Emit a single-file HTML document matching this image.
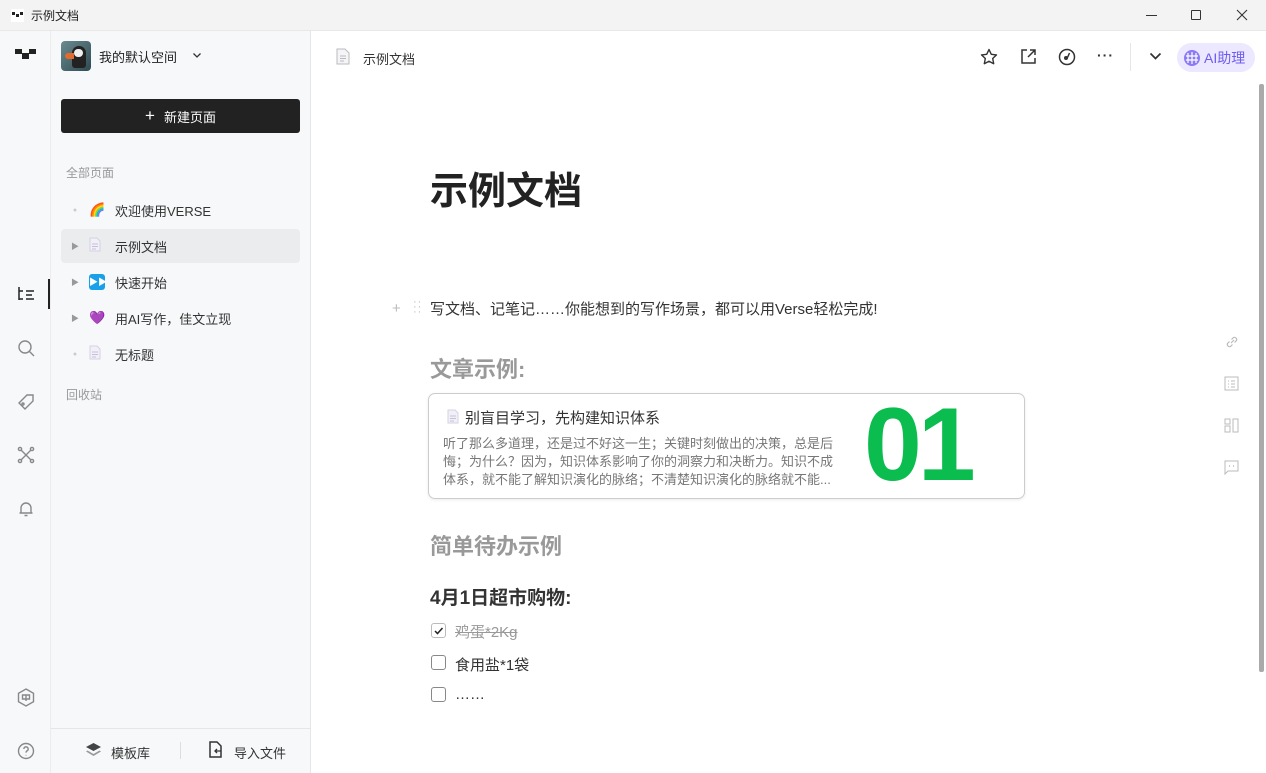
<!DOCTYPE html>
<html><head><meta charset="utf-8"><style>
*{box-sizing:border-box;margin:0;padding:0}
body{width:1266px;height:773px;overflow:hidden;background:#fff;font-family:"Liberation Sans","Noto Sans CJK SC",sans-serif;color:#222;position:relative}
.abs{position:absolute}
.title{left:0;top:0;width:1266px;height:31px;background:#f3f3f3;border-bottom:1px solid #e8e8e8}
.rail{left:0;top:31px;width:51px;height:742px;background:#f7f8fa;border-right:1px solid #ececec}
.side{left:51px;top:31px;width:260px;height:742px;background:#f7f8fa;border-right:1px solid #e6e6e6}
.item{position:absolute;left:10px;width:239px;height:34px;font-size:13px;color:#333;display:flex;align-items:center}
.item .tri{width:28px;text-align:center;color:#999;font-size:8px}
.item .ic{width:26px;font-size:13px}
.g{stroke:#888;fill:none;stroke-width:1.4}
</style></head><body>
<div class="abs title"></div>
<svg class="abs" style="left:11px;top:9px" width="13" height="13"><rect width="13" height="13" fill="#fff"/><rect x="1" y="3" width="3" height="3" fill="#222"/><rect x="5" y="5" width="3" height="3" fill="#222"/><rect x="9" y="3" width="3" height="3" fill="#222"/></svg>
<div class="abs" style="left:31px;top:7px;font-size:12px;color:#222">示例文档</div>
<div class="abs" style="left:1146px;top:15px;width:11px;height:1px;background:#333"></div>
<div class="abs" style="left:1191px;top:10px;width:10px;height:10px;border:1px solid #333;border-radius:1px"></div>
<svg class="abs" style="left:1236px;top:9px" width="12" height="12"><path d="M1 1L11 11M11 1L1 11" stroke="#333" stroke-width="1.1"/></svg>

<div class="abs rail"></div>
<svg class="abs" style="left:15px;top:47px" width="22" height="14"><rect x="0" y="2" width="7" height="5" fill="#222"/><rect x="7" y="6" width="7" height="6" fill="#222"/><rect x="14" y="2" width="7" height="5" fill="#222"/></svg>
<svg class="abs" style="left:18px;top:286px" width="18" height="16"><path d="M1 1v13M1 5h4M1 13h4M8 5h8M8 13h8M8 9h6" stroke="#222" stroke-width="1.5" fill="none"/></svg>
<div class="abs" style="left:48px;top:279px;width:2px;height:30px;background:#222"></div>
<svg class="abs" style="left:17px;top:339px" width="19" height="19"><circle cx="8" cy="8" r="6" class="g"/><path d="M12.5 12.5L17 17" class="g"/></svg>
<svg class="abs" style="left:17px;top:393px" width="18" height="18"><path d="M2 10L10 2h6v6l-8 8z" class="g"/><circle cx="6" cy="11" r="1" class="g"/></svg>
<svg class="abs" style="left:17px;top:446px" width="18" height="18"><path d="M4 4L14 14M14 4L4 14" class="g"/><circle cx="3" cy="3" r="1.6" class="g"/><circle cx="15" cy="3" r="1.6" class="g"/><circle cx="3" cy="15" r="1.6" class="g"/><circle cx="15" cy="15" r="1.6" class="g"/></svg>
<svg class="abs" style="left:17px;top:500px" width="18" height="18"><path d="M4 13V8a5 5 0 0110 0v5h1.5H2.5zM7.5 15.5h3" class="g"/></svg>
<svg class="abs" style="left:17px;top:688px" width="18" height="19"><path d="M9 1l7.5 4.3v8.4L9 18l-7.5-4.3V5.3z" class="g"/><path d="M5.5 7h7v4h-7zM9 7v6" class="g"/></svg>
<svg class="abs" style="left:17px;top:742px" width="19" height="19"><circle cx="9" cy="9" r="7.5" class="g"/><path d="M6.8 7a2.2 2.2 0 114 1.3c-.9.6-1.8 1-1.8 2.3" class="g"/><circle cx="9" cy="13.3" r=".5" fill="#888"/></svg>

<div class="abs side"></div>
<div class="abs" style="left:61px;top:41px;width:30px;height:30px;border-radius:4px;background:linear-gradient(135deg,#6a8a90,#2f4a52)"><div style="position:absolute;left:11px;top:5px;width:14px;height:22px;background:#222;border-radius:7px 7px 3px 3px"></div><div style="position:absolute;left:13px;top:8px;width:9px;height:8px;background:#eee;border-radius:4px"></div><div style="position:absolute;left:4px;top:12px;width:9px;height:6px;background:#e36a2c;border-radius:4px 0 0 4px"></div></div>
<div class="abs" style="left:99px;top:47px;font-size:13px;color:#222">我的默认空间</div>
<svg class="abs" style="left:192px;top:52px" width="10" height="7"><path d="M1.5 1.5L5 5l3.5-3.5" stroke="#333" stroke-width="1.3" fill="none"/></svg>
<div class="abs" style="left:61px;top:99px;width:239px;height:34px;background:#222;border-radius:3px;color:#fff;font-size:13px;display:flex;align-items:center;justify-content:center"><span style="font-size:17px;margin-right:9px;font-weight:300">+</span>新建页面</div>
<div class="abs" style="left:66px;top:164px;font-size:12px;color:#999">全部页面</div>
<div class="item" style="left:61px;top:193px"><span class="tri" style="font-size:7px;color:#ccc">●</span><span class="ic">🌈</span>欢迎使用VERSE</div>
<div class="item" style="left:61px;top:229px;background:#ebecee;border-radius:4px"><span class="tri">▶</span><span class="ic"><svg width="12" height="15"><path d="M1 1h7l3 3v10H1z" fill="#f1eff7" stroke="#d6d0e2"/><path d="M3 7h6M3 9.5h6M3 12h4" stroke="#c8c0da"/></svg></span>示例文档</div>
<div class="item" style="left:61px;top:265px"><span class="tri">▶</span><span class="ic"><span style="display:inline-block;width:16px;height:16px;background:#1aa0e8;border-radius:3px;color:#fff;font-size:9px;text-align:center;line-height:16px;vertical-align:middle">▶▶</span></span>快速开始</div>
<div class="item" style="left:61px;top:301px"><span class="tri">▶</span><span class="ic" style="color:#8a4fc8">💜</span>用AI写作，佳文立现</div>
<div class="item" style="left:61px;top:337px"><span class="tri" style="font-size:7px;color:#ccc">●</span><span class="ic"><svg width="12" height="15"><path d="M1 1h7l3 3v10H1z" fill="#f1eff7" stroke="#d6d0e2"/><path d="M3 7h6M3 9.5h6M3 12h4" stroke="#c8c0da"/></svg></span>无标题</div>
<div class="abs" style="left:66px;top:386px;font-size:12px;color:#999">回收站</div>
<div class="abs" style="left:51px;top:728px;width:259px;height:1px;background:#e6e6e6"></div>
<div class="abs" style="left:180px;top:742px;width:1px;height:17px;background:#ddd"></div>
<svg class="abs" style="left:85px;top:742px" width="17" height="16"><path d="M8.5 1L16 5l-7.5 4L1 5z" fill="#444"/><path d="M2.5 8.5L8.5 12l6-3.5L16 9.5 8.5 14 1 9.5z" fill="#999"/></svg>
<div class="abs" style="left:111px;top:743px;font-size:13px;color:#333">模板库</div>
<svg class="abs" style="left:208px;top:741px" width="16" height="18"><path d="M2 1h7l4 4v11H2z" fill="none" stroke="#333" stroke-width="1.5"/><path d="M13 10H7M9 8l-2 2 2 2" stroke="#333" stroke-width="1.3" fill="none"/></svg>
<div class="abs" style="left:234px;top:743px;font-size:13px;color:#333">导入文件</div>

<svg class="abs" style="left:336px;top:48px" width="14" height="17"><path d="M1 1h8l4 4v11H1z" fill="#f5f4f8" stroke="#bbb"/><path d="M4 8h6M4 10.5h6M4 13h4" stroke="#bbb"/></svg>
<div class="abs" style="left:363px;top:49px;font-size:13px;color:#333">示例文档</div>
<svg class="abs" style="left:980px;top:48px" width="18" height="18"><path d="M9 1.5l2.3 4.8 5.2.6-3.8 3.6 1 5.2L9 13.2l-4.7 2.5 1-5.2L1.5 6.9l5.2-.6z" fill="none" stroke="#333" stroke-width="1.4" stroke-linejoin="round"/></svg>
<svg class="abs" style="left:1020px;top:48px" width="17" height="17"><path d="M7 2H2v13h13v-5M10 2h5v5M15 2L8 9" fill="none" stroke="#333" stroke-width="1.5"/></svg>
<svg class="abs" style="left:1058px;top:48px" width="18" height="18"><circle cx="9" cy="9" r="7.5" fill="none" stroke="#333" stroke-width="1.5"/><circle cx="8" cy="10" r="2" fill="#333"/><path d="M9.5 9.5L11.5 5" stroke="#333" stroke-width="1.5"/></svg>
<div class="abs" style="left:1097px;top:47px;font-size:14px;color:#333;letter-spacing:1px;font-weight:bold">···</div>
<div class="abs" style="left:1130px;top:43px;width:1px;height:28px;background:#e6e6e6"></div>
<svg class="abs" style="left:1149px;top:52px" width="13" height="9"><path d="M1.5 1.5L6.5 6.5l5-5" stroke="#333" stroke-width="1.7" fill="none"/></svg>
<div class="abs" style="left:1177px;top:43px;width:78px;height:29px;background:#ebe8ff;border-radius:15px;color:#6f5df0;font-size:14px;display:flex;align-items:center;padding-left:6px"><svg width="18" height="18" style="margin-right:3px"><circle cx="9" cy="9" r="8" fill="#8a7af5"/><path d="M5 4v10M9 3v12M13 4v10M3 7h12M3 11h12" stroke="#fff" stroke-width="1.2"/></svg>AI助理</div>

<div class="abs" style="left:430px;top:160px;font-size:38px;font-weight:bold;color:#222">示例文档</div>
<div class="abs" style="left:392px;top:300px;color:#bbb;font-size:15px">+</div>
<div class="abs" style="left:413px;top:300px;color:#bbb;font-size:11px;line-height:5px;letter-spacing:1px">··<br>··<br>··</div>
<div class="abs" style="left:430px;top:298px;font-size:15px;color:#333">写文档、记笔记……你能想到的写作场景，都可以用Verse轻松完成!</div>
<div class="abs" style="left:430px;top:352px;font-size:22px;font-weight:bold;color:#999">文章示例:</div>
<div class="abs" style="left:428px;top:393px;width:597px;height:106px;border:1px solid #ccc;border-radius:7px;box-shadow:0 1px 3px rgba(0,0,0,.08)">
<svg class="abs" style="left:18px;top:15px" width="12" height="15"><path d="M1 1h7l3 3v10H1z" fill="#f1eff7" stroke="#d6d0e2"/><path d="M3 7h6M3 9.5h6M3 12h4" stroke="#c8c0da"/></svg>
<div class="abs" style="left:36px;top:13px;font-size:15px;color:#333">别盲目学习，先构建知识体系</div>
<div class="abs" style="left:14px;top:41px;width:394px;font-size:13px;line-height:18px;color:#777;transform-origin:0 0">听了那么多道理，还是过不好这一生；关键时刻做出的决策，总是后悔；为什么？因为，知识体系影响了你的洞察力和决断力。知识不成体系，就不能了解知识演化的脉络；不清楚知识演化的脉络就不能...</div>
<div class="abs" style="left:435px;top:-8px;font-size:104px;font-weight:bold;color:#0bbd4f;letter-spacing:-4px">01</div>
</div>
<div class="abs" style="left:430px;top:529px;font-size:22px;font-weight:bold;color:#999">简单待办示例</div>
<div class="abs" style="left:430px;top:583px;font-size:19px;font-weight:bold;color:#333">4月1日超市购物:</div>
<div class="abs" style="left:431px;top:623px;width:15px;height:15px;border:1px solid #bbb;border-radius:3px"><svg width="13" height="13" style="display:block"><path d="M3 7l2.5 2.5L10.5 4" stroke="#222" stroke-width="1.5" fill="none"/></svg></div>
<div class="abs" style="left:455px;top:621px;font-size:15px;color:#999;text-decoration:line-through">鸡蛋*2Kg</div>
<div class="abs" style="left:431px;top:655px;width:15px;height:15px;border:1px solid #888;border-radius:3px"></div>
<div class="abs" style="left:455px;top:654px;font-size:15px;color:#333">食用盐*1袋</div>
<div class="abs" style="left:431px;top:687px;width:15px;height:15px;border:1px solid #888;border-radius:3px"></div>
<div class="abs" style="left:455px;top:686px;font-size:15px;color:#333">……</div>

<svg class="abs" style="left:1224px;top:334px" width="16" height="16"><path d="M7 9l3-3M5.5 7.5l-2 2a2.3 2.3 0 003 3l2-2M10.5 8.5l2-2a2.3 2.3 0 00-3-3l-2 2" fill="none" stroke="#bbb" stroke-width="1.2"/></svg>
<svg class="abs" style="left:1224px;top:376px" width="15" height="15"><rect x="1" y="1" width="13" height="13" fill="none" stroke="#bbb"/><path d="M4 5h1M7 5h4M4 8h1M7 8h4M4 11h1M7 11h4" stroke="#bbb"/></svg>
<svg class="abs" style="left:1224px;top:418px" width="15" height="15"><rect x="1" y="1" width="5" height="5" fill="none" stroke="#bbb"/><rect x="1" y="8" width="5" height="6" fill="none" stroke="#bbb"/><rect x="9" y="1" width="5" height="13" fill="none" stroke="#bbb"/></svg>
<svg class="abs" style="left:1224px;top:460px" width="15" height="15"><path d="M1 1h13v10H4l-3 3z" fill="none" stroke="#bbb"/><path d="M5 6h1M9 6h1" stroke="#bbb" stroke-width="1.5"/></svg>
<div class="abs" style="left:1259px;top:84px;width:5px;height:588px;background:#aaa;border-radius:2px"></div>
</body></html>
